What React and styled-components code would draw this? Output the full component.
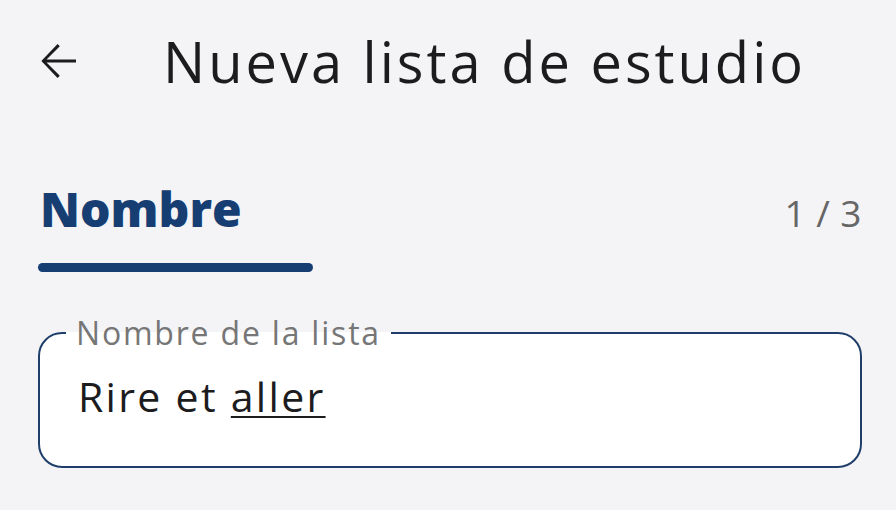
import styled, { createGlobalStyle } from "styled-components";

const GlobalStyle = createGlobalStyle`
  html, body {
    margin: 0;
    padding: 0;
    background: #f4f4f7;
    font-family: "Open Sans", "Noto Sans", sans-serif;
  }
`;

const Screen = styled.div`
  width: 896px;
  height: 510px;
  overflow: hidden;
  background: #f4f4f7;
`;

const TopBar = styled.div`
  display: flex;
  align-items: center;
  height: 122px;
  padding-left: 31px;
`;

const BackButton = styled.div`
  width: 54px;
  height: 54px;
  display: flex;
  align-items: center;
  justify-content: center;
  color: #1c1c1e;
`;

const Title = styled.h1`
  margin: 0 0 0 78px;
  font-size: 56px;
  font-weight: 400;
  color: #1c1c1e;
  letter-spacing: 3px;
`;

const Body = styled.div`
  padding: 0 34px 0 38px;
`;

const StepRow = styled.div`
  display: flex;
  justify-content: space-between;
  align-items: baseline;
  margin-top: 54px;
`;

const StepName = styled.div`
  font-size: 48px;
  font-weight: 800;
  color: #173e72;
  padding-left: 2px;
`;

const StepCount = styled.div`
  font-size: 37px;
  font-weight: 500;
  color: #666666;
  letter-spacing: 0.5px;
`;

const Progress = styled.div`
  width: 275px;
  height: 9px;
  border-radius: 5px;
  background: #173e72;
  margin-top: 22px;
`;

const Field = styled.fieldset`
  margin: 44px 0 0;
  padding: 0 38px;
  height: 152px;
  border: 2px solid #1f3e6a;
  border-radius: 24px;
  background: #ffffff;
  box-sizing: border-box;
`;

const Legend = styled.legend`
  padding: 0 10px 0 10px;
  margin-left: -12px;
  font-size: 32px;
  letter-spacing: 1.8px;
  color: #767676;
  line-height: 34px;
`;

const Value = styled.div`
  font-size: 41px;
  letter-spacing: 2.3px;
  color: #1c1c1e;
  margin-top: 18px;
`;

const Composing = styled.span`
  text-decoration: underline;
  text-decoration-thickness: 2px;
  text-underline-offset: 4px;
`;

export default function App() {
  return (
    <Screen>
      <GlobalStyle />
      <TopBar>
        <BackButton>
          <svg width="54" height="54" viewBox="0 0 24 24" fill="currentColor">
            <path d="M20 11.3H6.9l5.9-5.9-1-1L4.6 12l7.2 7.6 1-1-5.9-5.9H20z" />
          </svg>
        </BackButton>
        <Title>Nueva lista de estudio</Title>
      </TopBar>
      <Body>
        <StepRow>
          <StepName>Nombre</StepName>
          <StepCount>1 / 3</StepCount>
        </StepRow>
        <Progress />
        <Field>
          <Legend>Nombre de la lista</Legend>
          <Value>
            Rire et <Composing>aller</Composing>
          </Value>
        </Field>
      </Body>
    </Screen>
  );
}
